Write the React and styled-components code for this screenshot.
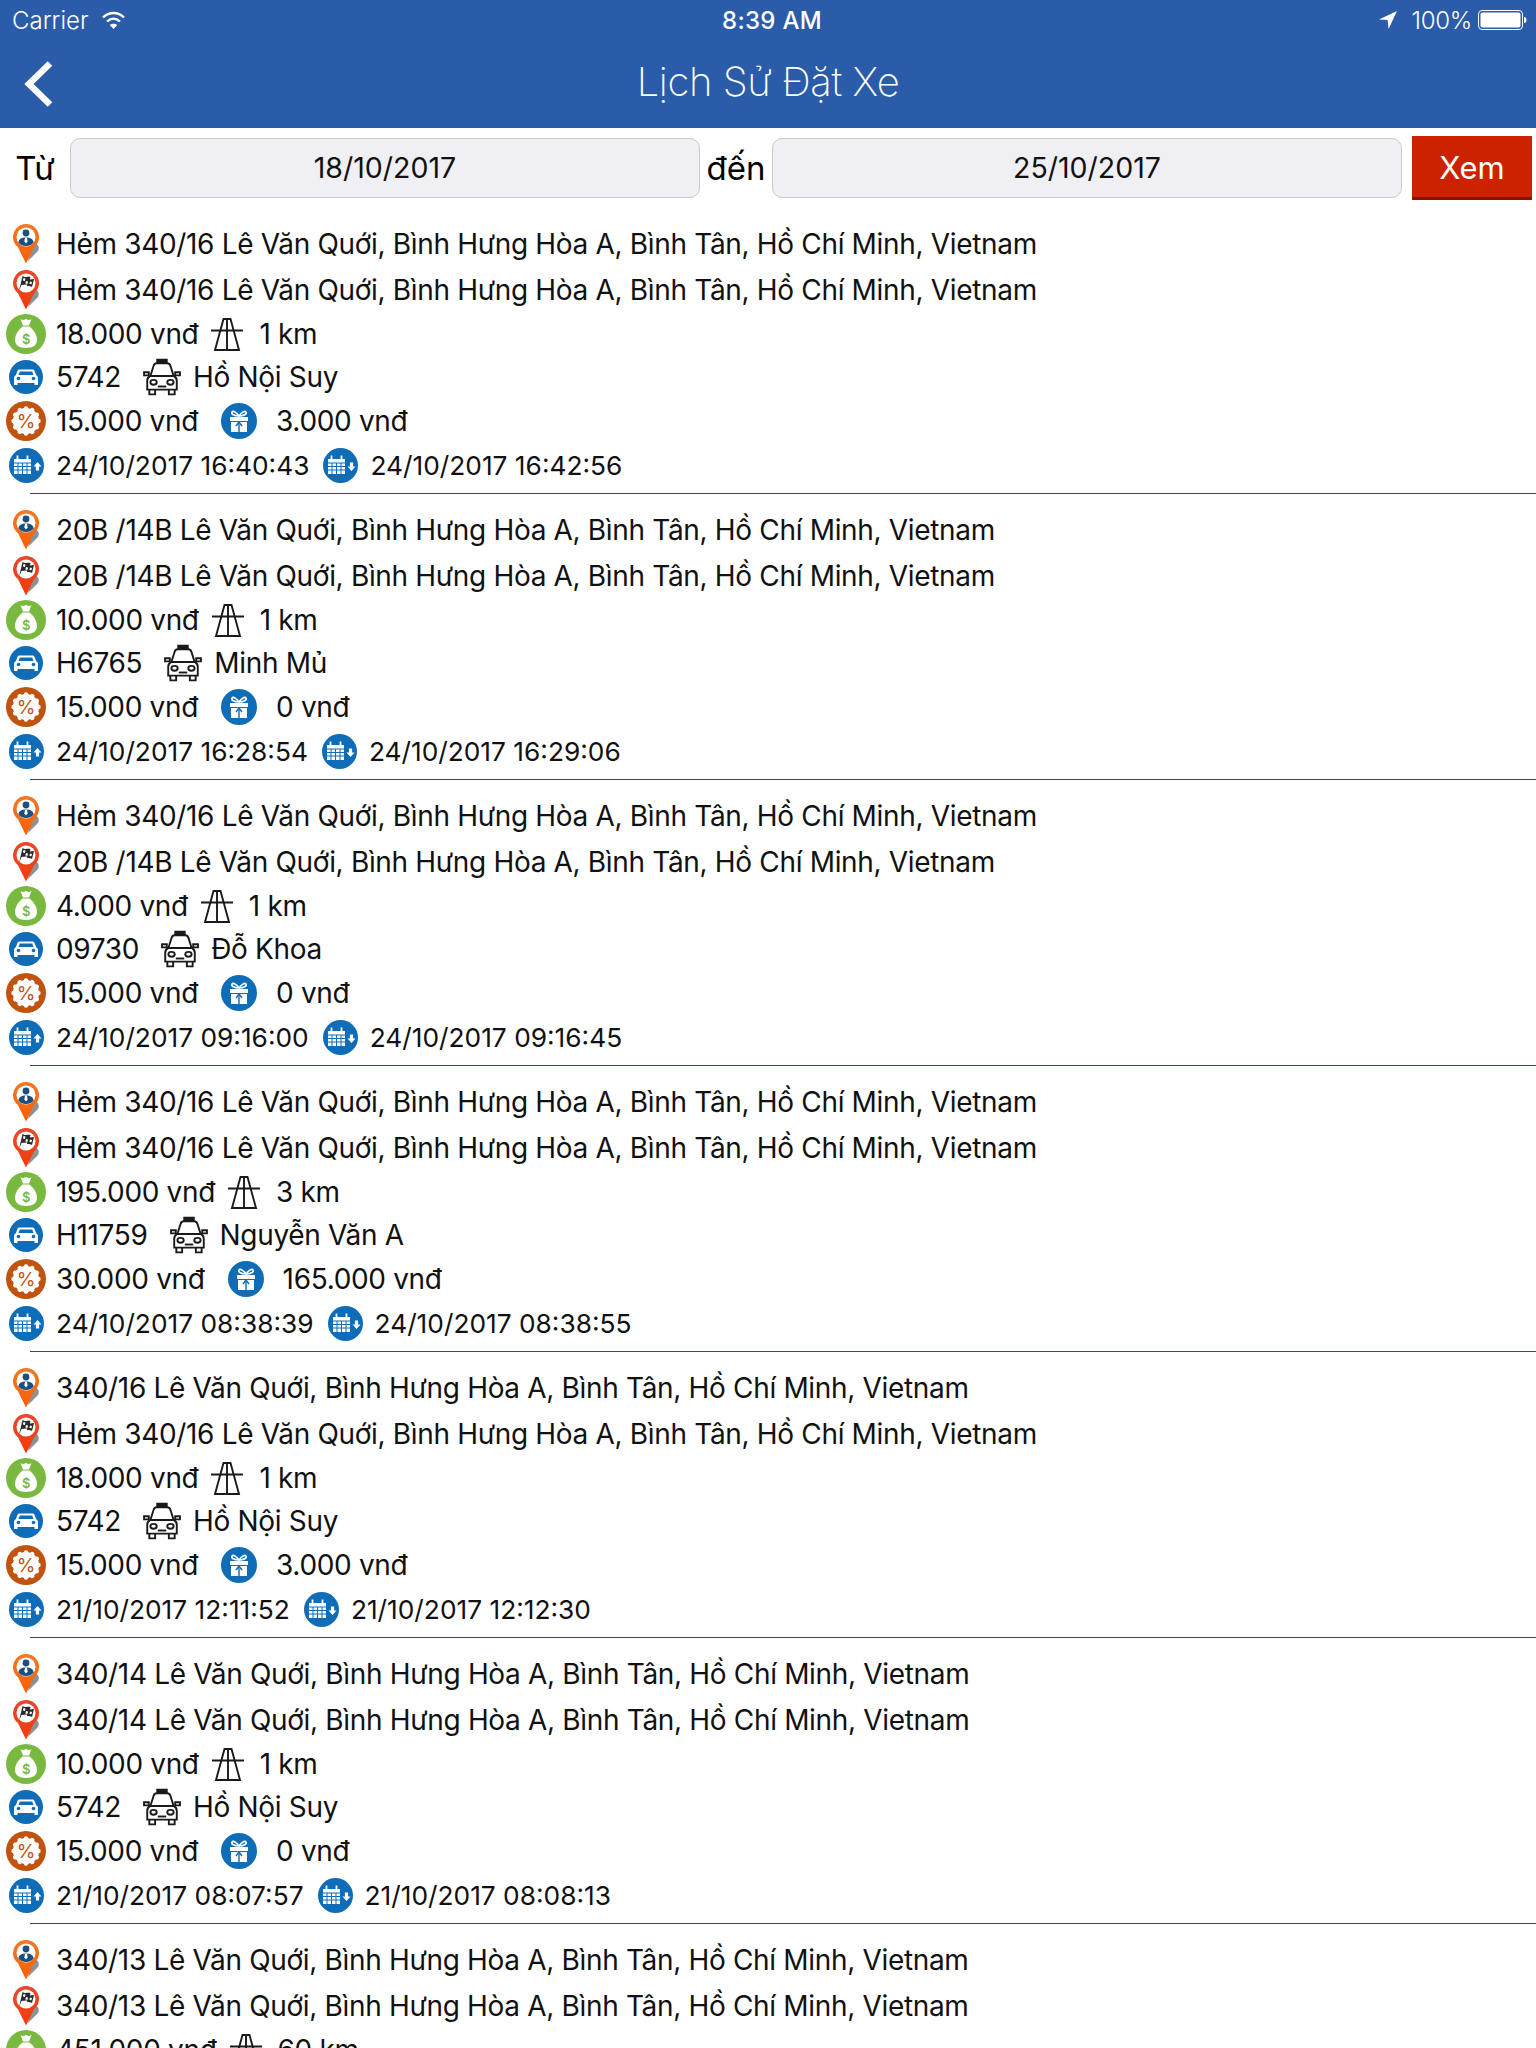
import React from 'react';
import styled, { createGlobalStyle } from 'styled-components';

const GlobalStyle = createGlobalStyle`
  html, body {
    margin: 0;
    padding: 0;
    background: #fff;
    font-family: Inter, "Noto Sans", "Liberation Sans", sans-serif;
  }
`;

const Page = styled.div`
  width: 1536px;
  height: 2048px;
  overflow: hidden;
  background: #fff;
`;

const Header = styled.header`
  background: #2b5ca9;
  color: #fff;
  height: 128px;
`;

const StatusBar = styled.div`
  height: 40px;
  display: grid;
  grid-template-columns: 1fr auto 1fr;
  align-items: center;
  padding: 0 9px 0 12px;
  font-size: 24px;
  font-weight: 300;
`;

const StatusLeft = styled.div`
  display: flex;
  align-items: center;
  gap: 12px;
`;

const StatusTime = styled.div`
  margin-left: 5px;
  font-weight: 500;
  letter-spacing: 0.3px;
`;

const StatusRight = styled.div`
  display: flex;
  align-items: center;
  justify-content: flex-end;
  gap: 6px;
`;

const BatteryLabel = styled.span`
  margin-left: 8px;
  letter-spacing: -0.3px;
`;

const NavBar = styled.div`
  height: 88px;
  display: flex;
  align-items: center;
  justify-content: center;
  position: relative;
`;

const BackButton = styled.div`
  position: absolute;
  left: 24px;
  top: 20px;
  line-height: 0;
`;

const Title = styled.h1`
  margin: 0 0 6px;
  font-size: 40px;
  font-weight: 200;
  letter-spacing: -0.4px;
`;

const FilterRow = styled.div`
  height: 80px;
  display: flex;
  align-items: center;
  padding: 0 4px 0 0;
`;

const FilterLabel = styled.span`
  width: ${(p) => p.$width}px;
  text-align: center;
  font-size: 33px;
  color: #000;
  flex: none;
`;

const DateField = styled.div`
  width: 630px;
  height: 60px;
  box-sizing: border-box;
  flex: none;
  background: #efeff4;
  border: 1.5px solid #c9c9ce;
  border-radius: 10px;
  display: flex;
  align-items: center;
  justify-content: center;
  padding-bottom: 2px;
  font-size: 28.5px;
  color: #111;
`;

const ViewButton = styled.button`
  margin-left: 10px;
  width: 120px;
  height: 64px;
  flex: none;
  border: 0;
  border-bottom: 3px solid #8c1203;
  background: #cc2200;
  color: #fff;
  font: inherit;
  font-size: 31px;
  padding: 2px 0 0;
`;

const List = styled.div`
  display: flex;
  flex-direction: column;
`;

const Item = styled.article`
  height: 286px;
  box-sizing: border-box;
  padding: 13px 0 0;
  position: relative;
  &::after {
    content: '';
    position: absolute;
    left: 30px;
    right: 0;
    bottom: 0;
    height: 1.5px;
    background: #1f4d9c;
  }
`;

const Row = styled.div`
  height: ${(p) => p.$h}px;
  display: flex;
  align-items: center;
  font-size: ${(p) => p.$size || 28}px;
  letter-spacing: ${(p) => (p.$size ? 0 : -0.33)}px;
  color: #111;
  white-space: nowrap;
`;

const LeadIcon = styled.div`
  width: 56px;
  padding-left: ${(p) => p.$left}px;
  box-sizing: border-box;
  flex: none;
  line-height: 0;
`;

const MidIcon = styled.div`
  flex: none;
  line-height: 0;
  margin-left: ${(p) => p.$before}px;
  margin-right: ${(p) => p.$after}px;
`;

const Wifi = () => (
  <svg width="25" height="20" viewBox="0 0 25 20" fill="none" stroke="#fff" strokeWidth="2.4">
    <path d="M2 7.5c6-6 15-6 21 0" />
    <path d="M6 11.5c4-3.8 9-3.8 13 0" />
    <path d="M12.5 19l-3.8-4c2.2-1.8 5.4-1.8 7.6 0z" fill="#fff" stroke="none" />
  </svg>
);

const LocationArrow = () => (
  <svg width="20" height="20" viewBox="0 0 20 20" fill="#fff">
    <path d="M19 1L1 9.5l8.600.6 1 9z" />
  </svg>
);

const Battery = () => (
  <svg width="49" height="22" viewBox="0 0 49 22">
    <rect x="0.5" y="1.5" width="44" height="19" rx="3.5" fill="none" stroke="#fff" strokeWidth="1" />
    <rect x="2.5" y="3.5" width="40" height="15" rx="2" fill="#fff" />
    <path d="M46 8c2 0 2.500 1.500 2.500 3s-.5 3-2.500 3z" fill="#fff" />
  </svg>
);

const Chevron = () => (
  <svg width="30" height="48" viewBox="0 0 30 48" fill="none" stroke="#fff" strokeWidth="6.500">
    <path d="M26 3.500L5 24l21 20.500" />
  </svg>
);

const Pin = ({ kind }) => {
  const from = kind === 'start' ? '#ee7a2a' : '#e6492e';
  const to = kind === 'start' ? '#fc5e00' : '#f53c0a';
  const id = `pin-${kind}`;
  return (
    <svg width="30" height="40" viewBox="0 0 30 40">
      <defs>
        <linearGradient id={id} x1="0" y1="0" x2="0" y2="1">
          <stop offset="0" stopColor={from} />
          <stop offset="1" stopColor={to} />
        </linearGradient>
      </defs>
      <path d="M19 19c6 0 8 4 6 8L15 37z" fill="#50545a" opacity="0.65" />
      <path d="M13 39.500L5 23.200A13 13 0 1121 23.200z" fill={`url(#${id})`} />
      <circle cx="13" cy="13" r="9.500" fill="#fff" />
      {kind === 'start' ? (
        <g>
          <circle cx="13" cy="9" r="3.400" fill="#1d4f7c" />
          <path d="M5.500 18.500c0-3.500 3-5 7.500-5s7.500 1.500 7.500 5c-1.500 2-4 3.500-7.500 3.500s-6-1.500-7.500-3.500z" fill="#1d4f7c" />
          <path d="M12 13.500h2l.6 4-1.600 2-1.600-2z" fill="#fff" />
        </g>
      ) : (
        <g>
          <path d="M6 21L9.500 6c3 2 5 0 8 1l-2 8c-2-1-5 0-7 0z" fill="#2a2a2a" />
          <path d="M15 9c2 1 4 0 6 0l-2 8c-1-1-3-1-5-1z" fill="#2a2a2a" />
          <path d="M10.500 8l2 .6-.6 2.400-2-.6zM13 11l2 .6-.6 2.400-2-.6zM17 11.500l2 .4-.6 2.400-2-.4z" fill="#fff" />
        </g>
      )}
    </svg>
  );
};

const MoneyIcon = () => (
  <svg width="40" height="40" viewBox="0 0 40 40">
    <circle cx="20" cy="20" r="20" fill="#7ab93f" />
    <path d="M14.500 5c2 1.500 3.500 1 5.500 0 2 1 3.500 1.500 5.500 0l-2.500 6.500h-6z" fill="#fff" />
    <path d="M16.500 12.500h7C28 16 31 21 31 26c0 5-4 8-11 8S9 31 9 26c0-5 3-10 7.500-13.500z" fill="#fff" />
    <text x="20" y="30" textAnchor="middle" fontSize="13" fontWeight="600" fill="#7ab93f" fontFamily="Inter, sans-serif">$</text>
  </svg>
);

const CarIcon = () => (
  <svg width="34" height="34" viewBox="0 0 34 34">
    <circle cx="17" cy="17" r="17" fill="#0f6cb6" />
    <path d="M10.500 9.500h13c1 0 1.800.6 2.100 1.500l1.600 4.200c1.200.6 1.800 1.700 1.800 3V25h-3.500v-2h-17v2H5v-6.800c0-1.300.6-2.400 1.800-3l1.600-4.200c.3-.9 1.100-1.500 2.100-1.500z" fill="#fff" />
    <path d="M10.800 11.500h12.400l1.300 3.500h-15z" fill="#0f6cb6" />
    <circle cx="9.500" cy="18.500" r="1.800" fill="#0f6cb6" />
    <circle cx="24.500" cy="18.500" r="1.800" fill="#0f6cb6" />
  </svg>
);

const scallops = Array.from({ length: 12 }, (_, i) => i * 30);

const PercentIcon = () => (
  <svg width="40" height="40" viewBox="0 0 40 40">
    <circle cx="20" cy="20" r="20" fill="#c2530f" />
    <circle cx="20" cy="20" r="13" fill="#fff" />
    {scallops.map((deg) => (
      <circle key={deg} cx="20" cy="7.500" r="2.200" fill="#fff" transform={`rotate(${deg} 20 20)`} />
    ))}
    <text x="20" y="27" textAnchor="middle" fontSize="19" fill="#c2530f" fontFamily="Inter, sans-serif">%</text>
  </svg>
);

const GiftIcon = () => (
  <svg width="36" height="36" viewBox="0 0 36 36">
    <circle cx="18" cy="18" r="18" fill="#0f6cb6" />
    <path d="M9 14h18v4H9zM10 19h7.300v10H10zM18.700 19H26v10h-7.300z" fill="#fff" />
    <path d="M18 13c-2-3-6-6-7-4s2 4 7 4c5 0 8-2 7-4s-5 1-7 4z" fill="none" stroke="#fff" strokeWidth="1.600" />
    <path d="M18 19l-3 4M18 19l3 4" stroke="#0f6cb6" strokeWidth="1.400" />
  </svg>
);

const CalendarIcon = ({ dir }) => (
  <svg width="35" height="35" viewBox="0 0 35 35">
    <circle cx="17.500" cy="17.500" r="17.500" fill="#0f6cb6" />
    <path d="M5 11h17v15H5z" fill="#fff" />
    <path d="M5 15h17M5 18.500h17M5 22h17M9 15v11M13.500 15v11M18 15v11" stroke="#0f6cb6" strokeWidth="1" />
    <path d="M8.500 7.500v4M18.500 7.500v4" stroke="#fff" strokeWidth="1.800" />
    {dir === 'up' ? (
      <path d="M28.500 14l-4 4.500h2.400v4h3.200v-4h2.400z" fill="#fff" />
    ) : (
      <path d="M28.500 23l-4-4.500h2.400v-4h3.200v4h2.400z" fill="#fff" />
    )}
  </svg>
);

const RoadIcon = () => (
  <svg width="32" height="33" viewBox="0 0 32 33" fill="none" stroke="#1a1a1a" strokeWidth="1.900">
    <path d="M12.500 1h7L28 32H4zM16 1v31M0 12.500h32" />
  </svg>
);

const TaxiIcon = () => (
  <svg width="38" height="38" viewBox="1 1 36 36" fill="none" stroke="#1a1a1a" strokeWidth="1.800">
    <path d="M14.500 6V2.500h9V6" fill="#1a1a1a" />
    <path d="M8 18l3-9.500c.5-1.500 1.500-2.500 3-2.500h10c1.500 0 2.500 1 3 2.500l3 9.500" />
    <path d="M8 18c-2 1-3 2.500-3 4.500V31h28v-8.500c0-2-1-3.500-3-4.500z" />
    <path d="M7 31v4.500h5.500V31M25.500 31v4.500H31V31" />
    <path d="M2 14.500h4.500v3H2zM31.500 14.500H36v3h-4.500z" fill="#fff" />
    <ellipse cx="11" cy="24" rx="3" ry="2.300" />
    <ellipse cx="27" cy="24" rx="3" ry="2.300" />
    <path d="M15 28h8" />
  </svg>
);

const gaps = {
  road: [13, 16],
  taxi: [22, 12],
  gift: [23, 19],
  cal: [14, 12],
};

const Trip = ({ trip }) => (
  <Item>
    <Row $h={46}>
      <LeadIcon $left={13}><Pin kind="start" /></LeadIcon>
      {trip.from}
    </Row>
    <Row $h={46}>
      <LeadIcon $left={13}><Pin kind="end" /></LeadIcon>
      {trip.to}
    </Row>
    <Row $h={42}>
      <LeadIcon $left={6}><MoneyIcon /></LeadIcon>
      {trip.price}
      <MidIcon $before={gaps.road[0]} $after={gaps.road[1]}><RoadIcon /></MidIcon>
      {trip.distance}
    </Row>
    {trip.car && (
      <>
        <Row $h={44}>
          <LeadIcon $left={9}><CarIcon /></LeadIcon>
          {trip.car}
          <MidIcon $before={gaps.taxi[0]} $after={gaps.taxi[1]}><TaxiIcon /></MidIcon>
          {trip.driver}
        </Row>
        <Row $h={44}>
          <LeadIcon $left={6}><PercentIcon /></LeadIcon>
          {trip.fee}
          <MidIcon $before={gaps.gift[0]} $after={gaps.gift[1]}><GiftIcon /></MidIcon>
          {trip.gift}
        </Row>
        <Row $h={44} $size={26.3}>
          <LeadIcon $left={9}><CalendarIcon dir="up" /></LeadIcon>
          {trip.start}
          <MidIcon $before={gaps.cal[0]} $after={gaps.cal[1]}><CalendarIcon dir="down" /></MidIcon>
          {trip.end}
        </Row>
      </>
    )}
  </Item>
);

const tail = 'Lê Văn Quới, Bình Hưng Hòa A, Bình Tân, Hồ Chí Minh, Vietnam';
const hem = `Hẻm 340/16 ${tail}`;
const b20 = `20B /14B ${tail}`;

const trips = [
  { from: hem, to: hem, price: '18.000 vnđ', distance: '1 km', car: '5742', driver: 'Hồ Nội Suy', fee: '15.000 vnđ', gift: '3.000 vnđ', start: '24/10/2017 16:40:43', end: '24/10/2017 16:42:56' },
  { from: b20, to: b20, price: '10.000 vnđ', distance: '1 km', car: 'H6765', driver: 'Minh Mủ', fee: '15.000 vnđ', gift: '0 vnđ', start: '24/10/2017 16:28:54', end: '24/10/2017 16:29:06' },
  { from: hem, to: b20, price: '4.000 vnđ', distance: '1 km', car: '09730', driver: 'Đỗ Khoa', fee: '15.000 vnđ', gift: '0 vnđ', start: '24/10/2017 09:16:00', end: '24/10/2017 09:16:45' },
  { from: hem, to: hem, price: '195.000 vnđ', distance: '3 km', car: 'H11759', driver: 'Nguyễn Văn A', fee: '30.000 vnđ', gift: '165.000 vnđ', start: '24/10/2017 08:38:39', end: '24/10/2017 08:38:55' },
  { from: `340/16 ${tail}`, to: hem, price: '18.000 vnđ', distance: '1 km', car: '5742', driver: 'Hồ Nội Suy', fee: '15.000 vnđ', gift: '3.000 vnđ', start: '21/10/2017 12:11:52', end: '21/10/2017 12:12:30' },
  { from: `340/14 ${tail}`, to: `340/14 ${tail}`, price: '10.000 vnđ', distance: '1 km', car: '5742', driver: 'Hồ Nội Suy', fee: '15.000 vnđ', gift: '0 vnđ', start: '21/10/2017 08:07:57', end: '21/10/2017 08:08:13' },
  { from: `340/13 ${tail}`, to: `340/13 ${tail}`, price: '451.000 vnđ', distance: '60 km' },
];

const App = () => (
  <Page>
    <GlobalStyle />
    <Header>
      <StatusBar>
        <StatusLeft>Carrier <Wifi /></StatusLeft>
        <StatusTime>8:39 AM</StatusTime>
        <StatusRight>
          <LocationArrow />
          <BatteryLabel>100%</BatteryLabel>
          <Battery />
        </StatusRight>
      </StatusBar>
      <NavBar>
        <BackButton><Chevron /></BackButton>
        <Title>Lịch Sử Đặt Xe</Title>
      </NavBar>
    </Header>
    <FilterRow>
      <FilterLabel $width={70}>Từ</FilterLabel>
      <DateField>18/10/2017</DateField>
      <FilterLabel $width={72}>đến</FilterLabel>
      <DateField>25/10/2017</DateField>
      <ViewButton>Xem</ViewButton>
    </FilterRow>
    <List>
      {trips.map((trip, i) => (
        <Trip key={i} trip={trip} />
      ))}
    </List>
  </Page>
);

export default App;
